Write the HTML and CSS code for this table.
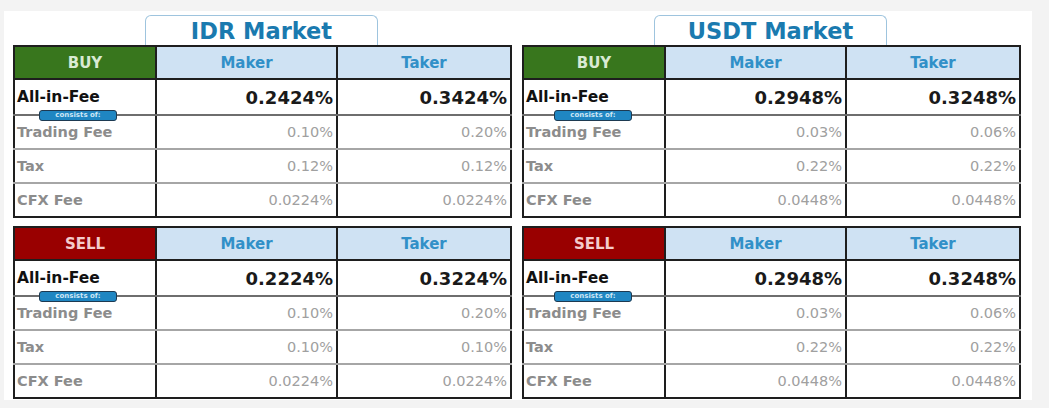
FILE: index.html
```html
<!DOCTYPE html>
<html>
<head>
<meta charset="utf-8">
<link rel="stylesheet" href="styles.css">
</head>
<body>
<div class="sheet">
  <section class="market market-idr">
    <div class="title">IDR Market</div>
    <div class="table-wrap">
      <table class="fees">
        <colgroup><col class="c1"><col class="c2"><col class="c3"></colgroup>
        <tr class="head"><th class="side buy">BUY</th><th>Maker</th><th>Taker</th></tr>
        <tr class="total"><td class="label">All-in-Fee</td><td>0.2424%</td><td>0.3424%</td></tr>
        <tr class="part first"><td class="label">Trading Fee</td><td>0.10%</td><td>0.20%</td></tr>
        <tr class="part"><td class="label">Tax</td><td>0.12%</td><td>0.12%</td></tr>
        <tr class="part"><td class="label">CFX Fee</td><td>0.0224%</td><td>0.0224%</td></tr>
      </table>
      <span class="badge">consists of:</span>
    </div>
    <div class="table-wrap">
      <table class="fees">
        <colgroup><col class="c1"><col class="c2"><col class="c3"></colgroup>
        <tr class="head"><th class="side sell">SELL</th><th>Maker</th><th>Taker</th></tr>
        <tr class="total"><td class="label">All-in-Fee</td><td>0.2224%</td><td>0.3224%</td></tr>
        <tr class="part first"><td class="label">Trading Fee</td><td>0.10%</td><td>0.20%</td></tr>
        <tr class="part"><td class="label">Tax</td><td>0.10%</td><td>0.10%</td></tr>
        <tr class="part"><td class="label">CFX Fee</td><td>0.0224%</td><td>0.0224%</td></tr>
      </table>
      <span class="badge">consists of:</span>
    </div>
  </section>
  <section class="market market-usdt">
    <div class="title">USDT Market</div>
    <div class="table-wrap">
      <table class="fees">
        <colgroup><col class="c1"><col class="c2"><col class="c3"></colgroup>
        <tr class="head"><th class="side buy">BUY</th><th>Maker</th><th>Taker</th></tr>
        <tr class="total"><td class="label">All-in-Fee</td><td>0.2948%</td><td>0.3248%</td></tr>
        <tr class="part first"><td class="label">Trading Fee</td><td>0.03%</td><td>0.06%</td></tr>
        <tr class="part"><td class="label">Tax</td><td>0.22%</td><td>0.22%</td></tr>
        <tr class="part"><td class="label">CFX Fee</td><td>0.0448%</td><td>0.0448%</td></tr>
      </table>
      <span class="badge">consists of:</span>
    </div>
    <div class="table-wrap">
      <table class="fees">
        <colgroup><col class="c1"><col class="c2"><col class="c3"></colgroup>
        <tr class="head"><th class="side sell">SELL</th><th>Maker</th><th>Taker</th></tr>
        <tr class="total"><td class="label">All-in-Fee</td><td>0.2948%</td><td>0.3248%</td></tr>
        <tr class="part first"><td class="label">Trading Fee</td><td>0.03%</td><td>0.06%</td></tr>
        <tr class="part"><td class="label">Tax</td><td>0.22%</td><td>0.22%</td></tr>
        <tr class="part"><td class="label">CFX Fee</td><td>0.0448%</td><td>0.0448%</td></tr>
      </table>
      <span class="badge">consists of:</span>
    </div>
  </section>
</div>
</body>
</html>
```

FILE: styles.css
```css
html, body {
  margin: 0;
  padding: 0;
  background: #f3f3f3;
}
body {
  font-family: "DejaVu Sans", "Liberation Sans", sans-serif;
  width: 1049px;
  height: 408px;
  overflow: hidden;
}
.sheet {
  margin: 11px 0 0 4px;
  width: 1028px;
  height: 389px;
  box-sizing: border-box;
  background: #ffffff;
  padding: 4px 0 0 9px;
  display: flex;
  gap: 12px;
}
.market {
  width: 497px;
  display: flex;
  flex-direction: column;
  align-items: center;
}
.title {
  width: 233px;
  height: 30px;
  box-sizing: border-box;
  border: 1.5px solid #9ec4de;
  border-bottom: none;
  border-radius: 6px 6px 0 0;
  text-align: center;
  font-weight: bold;
  font-size: 22.5px;
  line-height: 31px;
  color: #1a7aaf;
}
.table-wrap {
  position: relative;
  width: 497px;
}
.table-wrap + .table-wrap {
  margin-top: 8px;
}
.fees {
  width: 497px;
  border-collapse: collapse;
  table-layout: fixed;
  border: 2px solid #1e1e1e;
}
.c1 { width: 142px; }
.c2 { width: 181px; }
.c3 { width: 174px; }
.fees th, .fees td {
  border-right: 2px solid #1e1e1e;
  padding: 0 3px;
  white-space: nowrap;
  overflow: hidden;
}
.head th {
  height: 31px;
  background: #cfe2f3;
  color: #3190c8;
  font-size: 15px;
  font-weight: bold;
  text-align: center;
  border-bottom: 2px solid #1e1e1e;
}
.head .buy {
  background: #38761d;
  color: #d9ead3;
}
.head .sell {
  background: #990000;
  color: #f4cccc;
}
.total td {
  height: 32px;
  font-size: 18px;
  font-weight: bold;
  color: #1a1a1a;
  text-align: right;
  border-bottom: 2px solid #6e6e6e;
  padding-top: 1px;
  padding-bottom: 1px;
}
.total td.label {
  font-size: 15.5px;
  text-align: left;
  padding-left: 2px;
  color: #111111;
}
.part td {
  height: 32px;
  font-size: 14.5px;
  color: #a0a0a0;
  text-align: right;
  border-bottom: 2px solid #a6a6a6;
}
.part:last-child td {
  border-bottom: none;
}
.part td.label {
  font-size: 14.5px;
  font-weight: bold;
  color: #8c8c8c;
  text-align: left;
  padding-left: 2px;
}
.badge {
  position: absolute;
  top: 65px;
  left: 26px;
  width: 78px;
  height: 11px;
  box-sizing: border-box;
  background: #1f86c2;
  border: 1px solid #1d3a52;
  border-radius: 3px;
  color: #cfe6f5;
  font-size: 7px;
  font-weight: bold;
  line-height: 9px;
  text-align: center;
}
.market-usdt .badge {
  left: 32px;
}
```
